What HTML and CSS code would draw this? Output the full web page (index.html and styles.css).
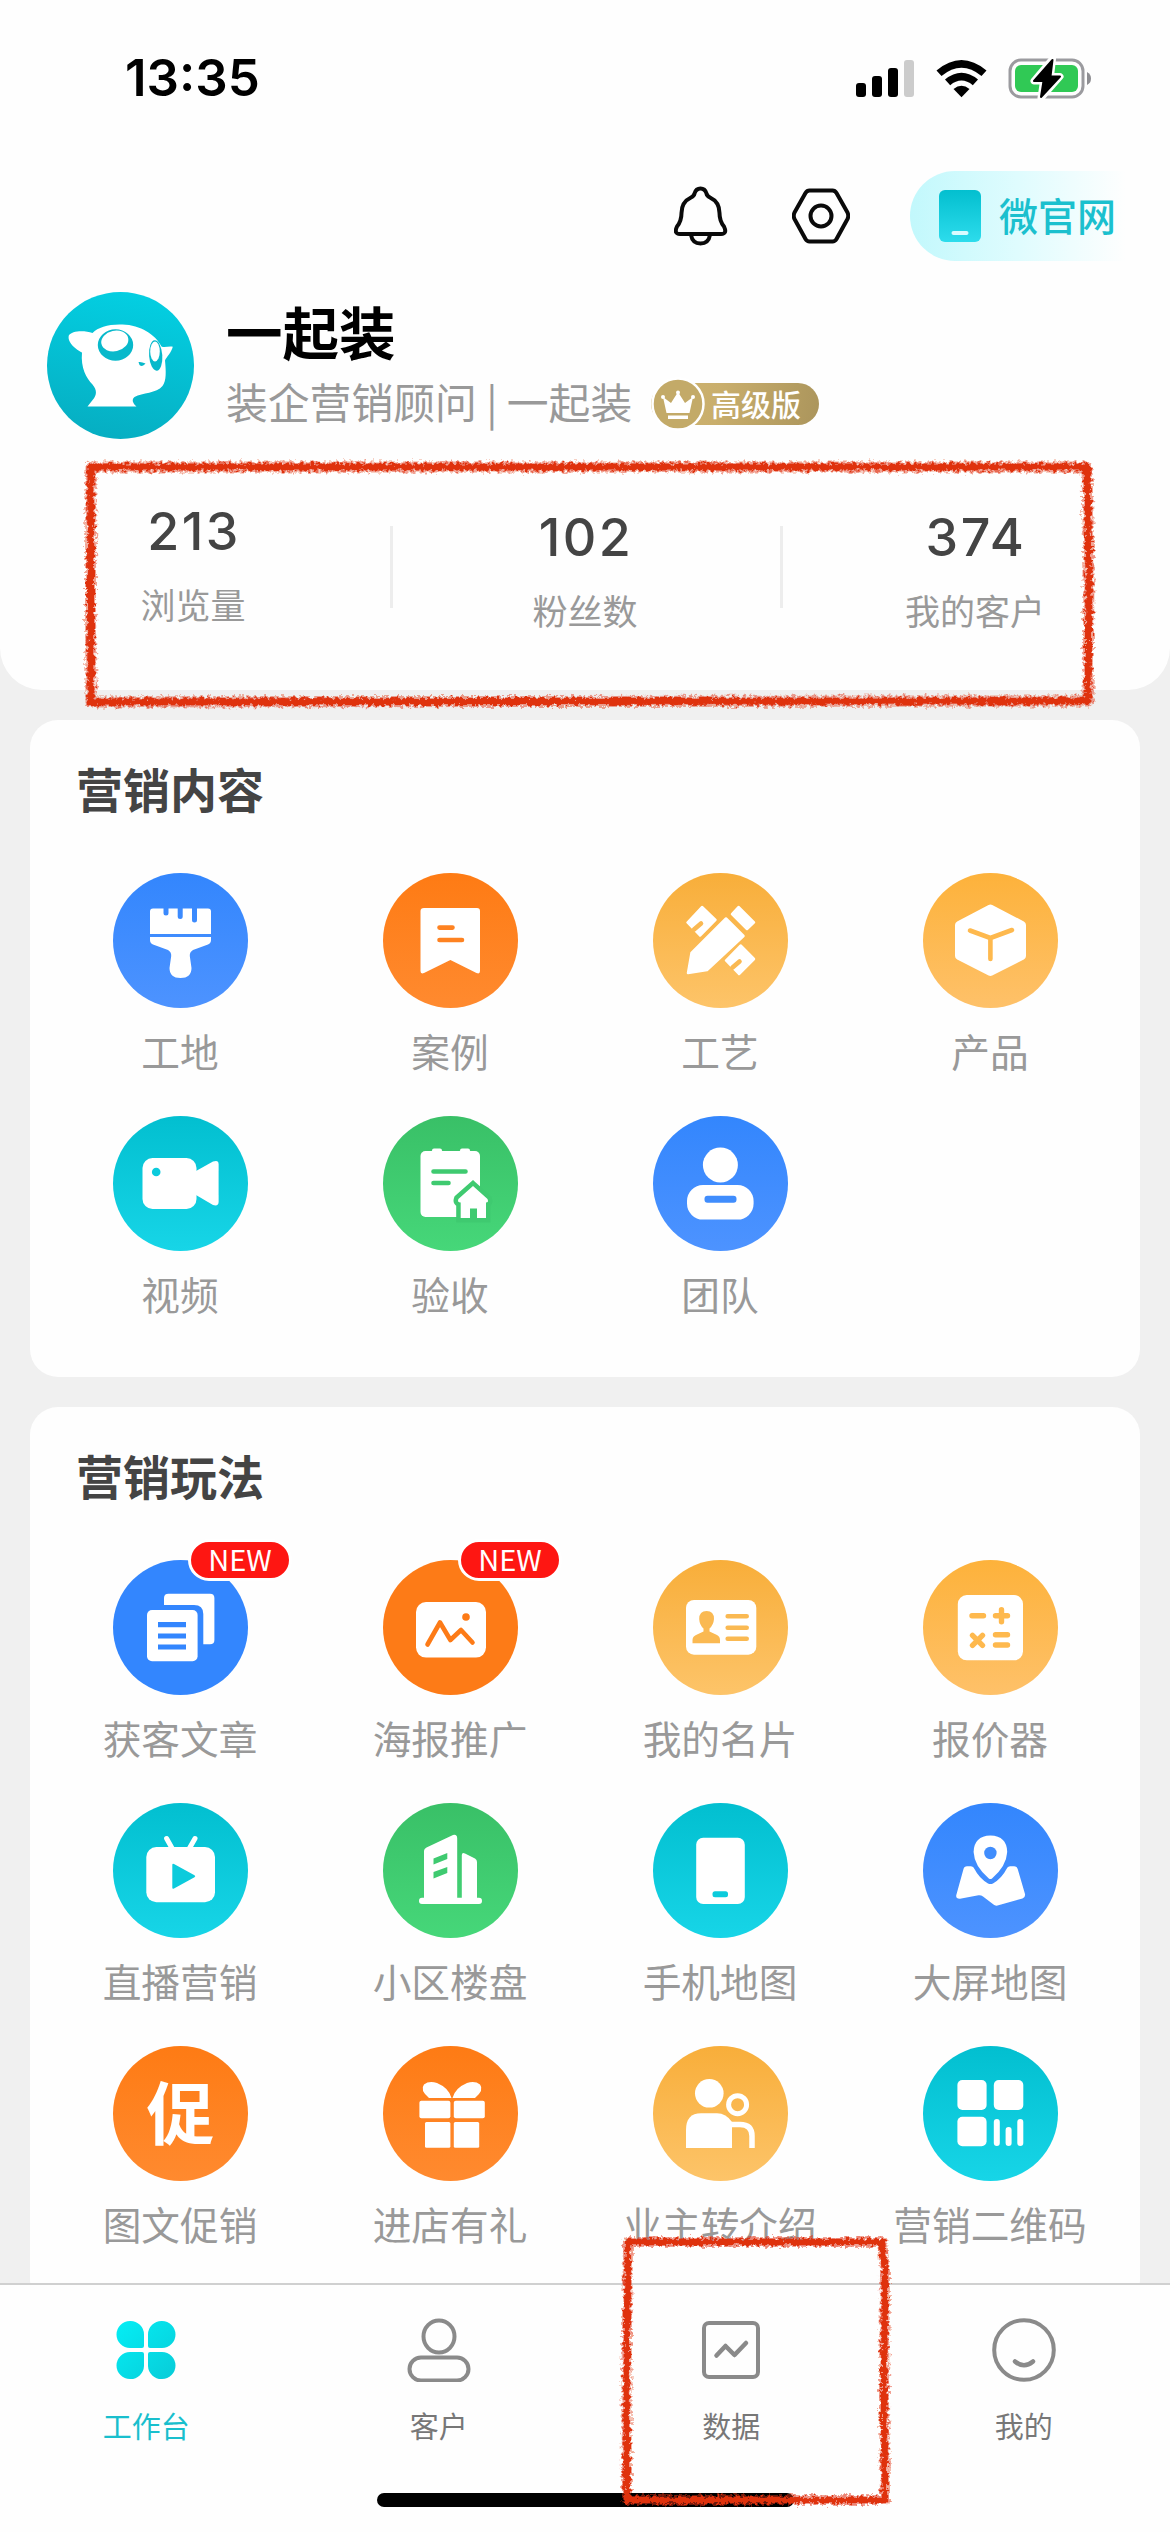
FILE: index.html
```html
<!DOCTYPE html>
<html lang="zh-CN">
<head>
<meta charset="utf-8">
<title>工作台</title>
<link rel="stylesheet" href="styles.css">
</head>
<body>
<div class="screen">
  <header class="header">
    <div class="status">
      <span class="time">13:35</span>
      <svg class="status-icons" width="240" height="44" viewBox="855 55 240 44">
        <rect x="856" y="82" width="10" height="14" rx="3"/>
        <rect x="872" y="75" width="10" height="21" rx="3"/>
        <rect x="888" y="67" width="10" height="29" rx="3"/>
        <rect x="904" y="59" width="10" height="37" rx="3" fill="#ccc"/>
        <path d="M936.500 69.500 Q961.500 48.500 986.500 69.500 L981.500 75 Q961.500 58.500 941.500 75Z"/>
        <path d="M945 78.500 Q961.500 65 978 78.500 L972.800 84.200 Q961.500 75 950.200 84.200Z"/>
        <path d="M953.500 88 Q961.500 81.500 969.500 88 L961.500 96.300Z"/>
        <rect x="1010" y="59" width="73" height="37" rx="11" fill="none" stroke="#9b9b9f" stroke-width="3"/>
        <path d="M1087 71 Q1091 73 1091 77.500 Q1091 82 1087 84Z" fill="#8e8e92"/>
        <rect x="1015" y="64" width="63" height="27" rx="6" fill="#30c955"/>
        <path d="M1052.500 58 L1034 80 H1043.500 L1041 97 L1060 75.500 H1050.500Z" stroke="#fff" stroke-width="7" stroke-linejoin="round"/>
        <path d="M1052.500 59 L1034 80 H1043.500 L1041 96 L1060 75.500 H1050.500Z" stroke="#000" stroke-width="2" stroke-linejoin="round"/>
      </svg>
    </div>

    <div class="actions">
      <svg class="bell" width="54" height="60" viewBox="0 0 54 60" fill="none" stroke="#0a0a0a" stroke-width="4" stroke-linejoin="round">
        <path d="M20.500 7.500 Q22 2.500 26.500 2.500 Q31 2.500 32.500 7.500 Q33 10 36 11.500 Q45.500 16 45.500 27 Q45.500 35 50 40.500 Q53.500 48 47 48 H6 Q-.5 48 3 40.500 Q7.500 35 7.500 27 Q7.500 16 17 11.500 Q20 10 20.500 7.500Z"/>
        <path d="M17 49 Q18.500 57.500 26.500 57.500 Q34.500 57.500 36 49"/>
      </svg>
      <svg class="hex" width="58" height="56" viewBox="0 0 58 56" fill="none" stroke="#0a0a0a" stroke-width="4" stroke-linejoin="round">
        <path d="M17.500 2.500 H40.500 Q43 2.500 44.500 5 L55.500 24.500 Q57 28 55.500 31 L44.500 51 Q43 53.500 40.500 53.500 H17.500 Q15 53.500 13.500 51 L2.500 31 Q1 28 2.500 24.500 L13.500 5 Q15 2.500 17.500 2.500Z"/>
        <circle cx="29" cy="28" r="10.500"/>
      </svg>
      <a class="site">
        <svg width="42" height="52" viewBox="0 0 42 52">
          <defs><linearGradient id="phone" x1="0" y1="0" x2="0" y2="1"><stop offset="0" stop-color="#03bfcf"/><stop offset="1" stop-color="#2ddcec"/></linearGradient></defs>
          <rect width="42" height="52" rx="6" fill="url(#phone)"/>
          <rect x="12.500" y="41" width="17" height="4" rx="2" fill="#d8fbff"/>
        </svg>
        <span>微官网</span>
      </a>
    </div>

    <div class="profile">
      <svg class="avatar" width="147" height="147" viewBox="16.500 12.500 147 147">
        <defs><linearGradient id="av" x1="0.600" y1="0" x2="0.400" y2="1"><stop offset="0" stop-color="#03cfe2"/><stop offset="1" stop-color="#06aec2"/></linearGradient></defs>
        <circle cx="90" cy="86" r="73.500" fill="url(#av)"/>
        <path fill="#fff" d="M62 53.500 C54 50.500 41 51 38.300 56 C36.500 63 46 70.500 51.500 73 C50 88 56 99 62 105 C67 111 66 116 62.500 120 L57 127 H106 C102 123.500 101 120 104 117.500 C112 113 126 114 132 106.500 C136 101 135.500 92 134.500 81 C136 77.500 141 73 142.300 67.300 C138 66.500 134 68.500 131 67 C125 55 110 45.500 92 45 C78 44.500 68 47.500 62 53.500Z"/>
        <ellipse cx="85" cy="65.500" rx="17.700" ry="15.700" fill="#08b9cb"/>
        <ellipse cx="84.300" cy="61.500" rx="13.700" ry="10.300" fill="#fff" transform="rotate(-12 84.300 61.500)"/>
        <ellipse cx="125.200" cy="76" rx="6.600" ry="15.200" fill="#08b9cb" transform="rotate(-4 125.200 76)"/>
        <ellipse cx="124.500" cy="72" rx="4.800" ry="10" fill="#fff"/>
        <path d="M108 82.500 Q111 82 115 84 Q112 88 109 85.500Z" fill="#08b9cb"/>
      </svg>
      <div class="who">
        <h1>一起装</h1>
        <div class="role">
          <span class="desc">装企营销顾问 | 一起装</span>
          <span class="vip">
            <svg width="54" height="54" viewBox="0 0 54 54">
              <circle cx="27" cy="27" r="25.500" fill="#c3aa68" stroke="#fff" stroke-width="2.500"/>
              <path fill="#fff" d="M12 20 L20 26 L27 15 L34 26 L42 20 L38.500 36 H15.500Z M17 38.500 H37 V42 H17Z"/>
              <circle cx="12" cy="20" r="2" fill="#fff"/><circle cx="27" cy="15.500" r="2" fill="#fff"/><circle cx="42" cy="20" r="2" fill="#fff"/>
            </svg>
            <em>高级版</em>
          </span>
        </div>
      </div>
    </div>

    <div class="stats">
      <div class="stat stat-first"><b>213</b><span>浏览量</span></div>
      <div class="stat"><b>102</b><span>粉丝数</span></div>
      <div class="stat"><b>374</b><span>我的客户</span></div>
    </div>
  </header>

  <main class="content">
    <section class="card">
      <h2>营销内容</h2>
      <div class="grid">
        <div class="tile"><svg class="ico blue" viewBox="0 0 135 135">
          <path d="M40 35.500 H50.500 V40 Q50.500 42.500 53 42.500 Q55.500 42.500 55.500 40 V35.500 H64.700 V43.500 Q64.700 46 67.200 46 Q69.700 46 69.700 43.500 V35.500 H79 V47 Q79 49.500 81.500 49.500 Q84 49.500 84 47 V35.500 H95 Q98 35.500 98 38.500 V61 H37 V38.500 Q37 35.500 40 35.500Z M37 64 H98 V67 Q98 70 95 71.500 L80 77 Q76.500 79 76.800 83 L78.500 95 Q78.500 105 67.500 105 Q56.500 105 56.500 95 L58.200 83 Q58.500 79 55 77 L40 71.500 Q37 70 37 67Z"/></svg><span>工地</span></div>
        <div class="tile"><svg class="ico orange" viewBox="0 0 135 135">
          <path d="M41 35 H94 Q97 35 97 38 V98 Q97 101.500 93.500 100 L67.400 87 L41 100 Q37.500 101.500 37.500 98 V38 Q37.500 35 41 35Z"/>
          <path class="cut" d="M56.500 54.600 H69.500 M56.500 67 H79"/></svg><span>案例</span></div>
        <div class="tile"><svg class="ico amber" viewBox="0 0 135 135">
          <path class="solid" d="M73 45.500 L90.500 63 L54 97 L35 100 L38.500 80Z M85.500 34 L101 49.300 L94 56 L79 41Z M49 34 L62.500 46.800 L47 62.500 L34.500 49.500Z M87.600 72.500 L101 86 L86 101 L73 87.500Z"/>
          <path class="cut" d="M41 56.500 L48 50.500 M79.500 94.500 L86.500 88.500"/></svg><span>工艺</span></div>
        <div class="tile"><svg class="ico gold" viewBox="0 0 135 135">
          <path stroke="#fff" stroke-width="8" stroke-linejoin="round" d="M67.400 35.500 L99 52 V83 L67.400 99 L36 83 V52Z"/>
          <path class="cut" d="M47 57.500 L67.400 65 L89 57 M67.400 65 V86"/></svg><span>产品</span></div>
        <div class="tile"><svg class="ico cyan" viewBox="0 0 135 135">
          <rect x="29.500" y="42" width="54" height="51" rx="10"/><path d="M83 55 L100 45.500 Q105.600 43.500 105.600 48 V86 Q105.600 90.500 100 89 L83 79Z"/>
          <circle class="hole" cx="43.200" cy="56" r="4.300"/></svg><span>视频</span></div>
        <div class="tile"><svg class="ico green" viewBox="0 0 135 135">
          <rect x="37.500" y="35" width="59.500" height="66" rx="5"/><rect x="49" y="32.500" width="10" height="6" rx="2"/><rect x="77" y="32.500" width="10" height="6" rx="2"/>
          <path class="cut" d="M50.500 55.500 H82.500 M50.500 67 H65.500"/>
          <path class="outlined" d="M90 70 L104.500 83 Q106 86.500 103 86.500 V102 H77.700 V86.500 Q74 86.500 75.400 83Z"/>
          <path d="M90 70 L104.500 83 Q106 86.500 103 86.500 V102 H94 V92.500 H87 V102 H77.700 V86.500 Q74 86.500 75.400 83Z"/><rect class="hole" x="87" y="92.500" width="7" height="10"/></svg><span>验收</span></div>
        <div class="tile"><svg class="ico blue" viewBox="0 0 135 135">
          <circle cx="67.400" cy="49" r="17.500"/><rect x="34" y="69" width="66.600" height="34.600" rx="16"/><rect class="hole" x="51.500" y="79.800" width="32" height="7" rx="3"/></svg><span>团队</span></div>
      </div>
    </section>

    <section class="card">
      <h2>营销玩法</h2>
      <div class="grid">
        <div class="tile"><i class="new">NEW</i><svg class="ico blue flat" viewBox="0 0 135 135">
          <path d="M51 45 V38 Q51 33.700 55.500 33.700 H97 Q101.400 33.700 101.400 38 V80 Q101.400 84.300 97 84.300 H90.300 V54 Q90.300 45 81 45Z"/>
          <rect x="34" y="50" width="50.600" height="51.300" rx="5"/><path class="cut square" d="M45 64.700 H73 M45 76 H73 M45 87 H73"/></svg><span>获客文章</span></div>
        <div class="tile"><i class="new">NEW</i><svg class="ico orange flat" viewBox="0 0 135 135">
          <rect x="33" y="42" width="70" height="55.600" rx="10"/><circle class="hole" cx="83" cy="57" r="3.800"/>
          <path class="cut" d="M44.500 84.500 L57 62.500 L67.400 80 L78 70 L89.500 82.500"/></svg><span>海报推广</span></div>
        <div class="tile"><svg class="ico amber" viewBox="0 0 135 135">
          <rect x="33" y="40" width="70.300" height="54.700" rx="8"/>
          <path class="hole" d="M53.600 51 Q61 51 61 59 Q60.500 65 56.500 68.500 V71.500 L64 75 Q67 76.500 67 80 V83.300 H39.500 V80 Q39.500 76.500 43 75 L50.500 71.500 V68.500 Q46.500 65 46.200 59 Q46.200 51 53.600 51Z"/>
          <path class="cut" d="M74.700 56.300 H93.700 M74.700 67.700 H93.700 M74.700 78.700 H93.700"/></svg><span>我的名片</span></div>
        <div class="tile"><svg class="ico gold" viewBox="0 0 135 135">
          <rect x="34.800" y="35" width="65.200" height="65.300" rx="9"/>
          <path class="cut thick" d="M49 55.700 H60.500 M72.500 55.700 H84.500 M78.500 49.700 V61.700 M49.500 75.300 L59.500 85.300 M59.500 75.300 L49.500 85.300 M72.500 74.700 H84.500 M72.500 85 H84.500"/></svg><span>报价器</span></div>
        <div class="tile"><svg class="ico cyan" viewBox="0 0 135 135">
          <rect x="33.300" y="44" width="68.700" height="55.300" rx="10"/><path d="M53.600 35.500 L59.500 46 M82 35.500 L76 46" stroke="#fff" stroke-width="5" stroke-linecap="round"/>
          <path class="hole" d="M59.300 62 Q59.300 60 61 61 L81.500 72.300 Q83 73.300 81.500 74.300 L61 85.500 Q59.300 86.500 59.300 84.500Z"/></svg><span>直播营销</span></div>
        <div class="tile"><svg class="ico green" viewBox="0 0 135 135">
          <path d="M41 48 Q41 45.500 43.500 44.500 L70 32 Q74.200 31 74.200 35.500 V94.700 H78.800 V52 Q79 49 82 50.500 L92 55.500 Q94 56.500 94 59 V94.700 H96 Q99 94.700 99 98 Q99 101 96 101 H39 Q36 101 36 98 Q36 94.700 39 94.700 H41Z"/>
          <path class="hole" d="M50.500 55.500 L64.300 50 V56 L50.500 61.500Z M50.500 69 L64.300 64 V70 L50.500 75.500Z"/></svg><span>小区楼盘</span></div>
        <div class="tile"><svg class="ico cyan" viewBox="0 0 135 135">
          <rect x="43.200" y="34.700" width="48.600" height="66.300" rx="7"/><rect class="hole" x="59.500" y="88.300" width="15.500" height="6" rx="2.500"/></svg><span>手机地图</span></div>
        <div class="tile"><svg class="ico blue" viewBox="0 0 135 135">
          <path d="M44 63.300 H48 Q50.500 63.300 51.500 66 Q56 75 65 80.500 Q67.400 81.500 70 80.500 Q79 75 83.500 66 Q84.500 63.300 87 63.300 H91 Q94 63.300 94.700 66 L102 91 Q102.500 94.500 99.500 95.500 L74.500 102.500 Q72 103 70.500 101.500 L60 93.500 Q58 92 55.500 92.300 L37 95.800 Q32.500 96 33.300 92 L40.500 66 Q41.200 63.300 44 63.300Z"/>
          <path d="M67.400 32.500 Q84 33 84.200 49 Q83.500 63 69 75.500 Q67.400 76.500 65.800 75.500 Q51.300 63 50.600 49 Q51 33 67.400 32.500Z"/><circle class="hole" cx="67.400" cy="50" r="6.200"/></svg><span>大屏地图</span></div>
        <div class="tile"><svg class="ico orange" viewBox="0 0 135 135">
          <text x="67.500" y="92.500" text-anchor="middle" class="glyph">促</text></svg><span>图文促销</span></div>
        <div class="tile"><svg class="ico orange" viewBox="0 0 135 135">
          <path d="M68.500 52 H46 Q36.500 44 41 38.500 Q46 34.500 54 37 Q66 42 68.500 52Z M69.500 52 H92 Q101.500 44 97 38.500 Q92 34.500 84 37 Q72 42 69.500 52Z"/>
          <rect x="36.400" y="54.700" width="31" height="17.600" rx="2"/><rect x="70.800" y="54.700" width="31" height="17.600" rx="2"/><rect x="42" y="76" width="25.400" height="25.700" rx="1.500"/><rect x="70.800" y="76" width="25.400" height="25.700" rx="1.500"/></svg><span>进店有礼</span></div>
        <div class="tile"><svg class="ico amber" viewBox="0 0 135 135">
          <circle cx="56.300" cy="47.300" r="14.300"/><path d="M33 102 V84 Q33 67.300 48 67.300 H64 Q73 67.300 79 76 V102Z"/>
          <circle cx="84.600" cy="58.700" r="9" fill="none" stroke="#fff" stroke-width="5"/><path d="M76 78.500 H87 Q99 78.500 99 90 V102" fill="none" stroke="#fff" stroke-width="5.500"/></svg><span>业主转介绍</span></div>
        <div class="tile"><svg class="ico cyan" viewBox="0 0 135 135">
          <rect x="34.400" y="34" width="29.200" height="30" rx="5"/><rect x="70.800" y="34" width="29.500" height="30" rx="5"/><rect x="34.400" y="70.700" width="29.200" height="29.500" rx="5"/>
          <rect x="70.800" y="73" width="6" height="27" rx="3"/><rect x="82.600" y="81" width="6" height="19" rx="3"/><rect x="94.300" y="73" width="6" height="27" rx="3"/></svg><span>营销二维码</span></div>
      </div>
    </section>
  </main>

  <nav class="tabbar">
    <div class="tabs">
      <div class="tab active">
        <svg width="64" height="64" viewBox="0 0 64 64">
          <defs><linearGradient id="clover" x1="0" y1="0" x2="1" y2="1"><stop offset="0" stop-color="#04eef5"/><stop offset="1" stop-color="#08ccd8"/></linearGradient></defs>
          <path fill="url(#clover)" d="M16 3 A13.500 13.500 0 0 1 30 16.500 V28 Q30 30 28 30 H16 A13.500 13.500 0 0 1 16 3Z M48 3 A13.500 13.500 0 0 1 48 30 H36 Q34 30 34 28 V16.500 A13.500 13.500 0 0 1 48 3Z M16 34 H28 Q30 34 30 36 V48 A13.500 13.500 0 0 1 16 61 A13.500 13.500 0 0 1 16 34Z M36 34 H48 A13.500 13.500 0 0 1 48 61 A13.500 13.500 0 0 1 34 48 V36 Q34 34 36 34Z"/>
        </svg><span>工作台</span></div>
      <div class="tab"><svg width="64" height="64" viewBox="0 0 64 64"><ellipse cx="32" cy="18.500" rx="15.500" ry="16"/><rect x="2.500" y="39.500" width="59" height="23" rx="11.500"/></svg><span>客户</span></div>
      <div class="tab"><svg width="64" height="64" viewBox="0 0 64 64"><rect x="5" y="5" width="54" height="54" rx="5"/><path d="M17.500 37.500 L26.500 28 L35.500 37 L47 25" stroke-width="4.500" stroke-linecap="round" stroke-linejoin="round"/></svg><span>数据</span></div>
      <div class="tab"><svg width="64" height="64" viewBox="0 0 64 64"><circle cx="32" cy="32" r="29.800"/><path d="M23 43.500 Q32 51 41 43.500" stroke-width="4.500" stroke-linecap="round"/></svg><span>我的</span></div>
    </div>
    <div class="home"></div>
  </nav>

  <!-- Crayon frames highlighting the statistics and the data tab -->
  <svg class="marks" width="1170" height="2532" viewBox="0 0 1170 2532">
    <defs>
      <filter id="crayon" filterUnits="userSpaceOnUse" x="0" y="400" width="1170" height="2132">
        <feTurbulence type="fractalNoise" baseFrequency="0.280" numOctaves="3" seed="4" result="n"/>
        <feDisplacementMap in="SourceGraphic" in2="n" scale="8" xChannelSelector="R" yChannelSelector="G"/>
      </filter>
    </defs>
    <g filter="url(#crayon)" fill="none" stroke="#df300f" stroke-linejoin="round">
      <path stroke-width="11" stroke-opacity="0.450" d="M91 467 H1087 L1089 575 L1088 701 L91 702 L90.500 590Z"/>
      <path stroke-width="7" d="M91 467 H1087 L1089 575 L1088 701 L91 702 L90.500 590Z"/>
      <path stroke-width="10" stroke-opacity="0.450" d="M628 2242 H882 L885 2270 L884 2400 L885 2500 H627 L626.500 2380Z"/>
      <path stroke-width="6.500" d="M628 2242 H882 L885 2270 L884 2400 L885 2500 H627 L626.500 2380Z"/>
    </g>
  </svg>
</div>
</body>
</html>
```
FILE: styles.css
```css
* { box-sizing: border-box; }

body {
  margin: 0;
  font-family: "Noto Sans CJK SC", "Noto Sans", sans-serif;
}

.screen {
  position: relative;
  display: flex;
  flex-direction: column;
  width: 1170px;
  height: 2532px;
  overflow: hidden;
  background: #f0f0f0;
}

/* Header */
.header {
  flex: none;
  height: 690px;
  background: #fefefe;
  border-radius: 0 0 42px 42px;
}

.status {
  display: flex;
  justify-content: space-between;
  align-items: center;
  height: 156px;
  padding: 0 75px 0 125px;
}

.time {
  font: 600 51px/60px Inter, sans-serif;
}

.actions {
  display: flex;
  justify-content: flex-end;
  align-items: center;
  height: 120px;
  padding-right: 44px;
}

.bell { margin-right: 64px; }
.hex { margin-right: 60px; }

.site {
  display: flex;
  align-items: center;
  gap: 18px;
  width: 216px;
  height: 90px;
  padding-left: 29px;
  border-radius: 45px 0 0 45px;
  background: linear-gradient(90deg, #c2f8fc, #dffcfe 50%, #fefefe);
}

.site span {
  margin-bottom: 5px;
  color: #1bc0ce;
  font-size: 39px;
  font-weight: 500;
  line-height: 56px;
  white-space: nowrap;
}

.profile {
  display: flex;
  height: 164px;
  padding: 16px 0 0 47px;
}

.who { padding-left: 32px; }

.who h1 {
  margin: 6px 0 0;
  color: #000;
  font-size: 56.500px;
  font-weight: 700;
  line-height: 64px;
}

.role {
  display: flex;
  align-items: center;
  height: 54px;
  margin-top: 15px;
  color: #999;
  font-size: 41.800px;
  white-space: pre;
}

.desc {
  width: 406px;
  margin-bottom: 6px;
  line-height: 54px;
}

.vip {
  display: flex;
  align-items: center;
  height: 42px;
  margin-left: 19px;
  padding-right: 18px;
  border-radius: 21px;
  background: linear-gradient(100deg, #cfb570, #c9ae6c 40%, #ab955c);
}

.vip svg { margin-right: 6px; }

.vip em {
  margin-bottom: 3px;
  color: #fff;
  font-size: 30px;
  font-style: normal;
  font-weight: 500;
  line-height: 40px;
}

.stats {
  display: grid;
  grid-template-columns: repeat(3, 1fr);
  padding-top: 66px;
}

.stat {
  display: flex;
  flex-direction: column;
  align-items: center;
  height: 130px;
  background: linear-gradient(#ededed, #ededed) no-repeat 0 20px / 3px 82px;
}

.stat-first {
  padding-right: 4px;
  margin-top: -6px;
  background: none;
}

.stat b {
  color: #444;
  font: 500 52px/60px Inter, sans-serif;
  margin-top: 2px;
  padding-left: 2px;
  letter-spacing: 2.500px;
}

.stat span {
  margin-top: 17px;
  color: #999;
  font-size: 35px;
  line-height: 50px;
}

/* Cards */
.content {
  flex: 1;
  min-height: 0;
  overflow: hidden;
  padding: 30px 30px 0;
}

.card {
  margin-bottom: 30px;
  padding: 38px 15px 57px;
  border-radius: 28px;
  background: #fefefe;
}

.card h2 {
  margin: 0 0 55px 31px;
  color: #444;
  font-size: 47px;
  font-weight: 700;
  line-height: 60px;
}

.grid {
  display: grid;
  grid-template-columns: repeat(4, 270px);
  row-gap: 39px;
}

.tile {
  position: relative;
  display: flex;
  flex-direction: column;
  align-items: center;
}

.tile span {
  margin-top: 15px;
  color: #999;
  font-size: 38.700px;
  line-height: 54px;
}

.ico {
  width: 135px;
  height: 135px;
  border-radius: 50%;
  fill: #fff;
  background: linear-gradient(var(--from), var(--to));
}

.blue { --from: #3386fd; --to: #4d93ff; --ink: #408dfd; }
.orange { --from: #fe7b14; --to: #ff8a2f; --ink: #fe8221; }
.amber { --from: #f8ae3a; --to: #fdc469; --ink: #fab952; }
.gold { --from: #fdb23b; --to: #fec169; --ink: #feb94e; }
.cyan { --from: #02bfd0; --to: #17d5e7; --ink: #0ccbdc; }
.green { --from: #39c067; --to: #46d779; --ink: #3fca70; }
.blue.flat { --from: #3386fe; --to: #3386fe; --ink: #3386fe; }
.orange.flat { --from: #fd7b17; --to: #fd7b17; --ink: #fd7b17; }

.hole { fill: var(--ink); }

.cut {
  fill: none;
  stroke: var(--ink);
  stroke-width: 4.600;
  stroke-linecap: round;
  stroke-linejoin: round;
}

.square { stroke-linecap: butt; stroke-width: 5.200; }
.thick { stroke-width: 5.400; }
.outlined { stroke: var(--ink); stroke-width: 9; }

.solid {
  stroke: #fff;
  stroke-width: 2.500;
  stroke-linejoin: round;
}

.glyph {
  font-size: 68px;
  font-weight: 700;
}

.new {
  position: absolute;
  top: -21px;
  left: 143px;
  width: 104px;
  height: 42px;
  border: 3px solid #fff;
  border-radius: 21px;
  background: #fe1612;
  color: #fff;
  font-size: 29px;
  font-style: normal;
  line-height: 32px;
  text-align: center;
}

/* Bottom navigation */
.tabbar {
  flex: none;
  height: 249px;
  border-top: 2px solid #d0d0d0;
  background: #fefefe;
}

.tabs {
  display: grid;
  grid-template-columns: repeat(4, 1fr);
  height: 208px;
  padding-top: 33px;
}

.tab {
  display: flex;
  flex-direction: column;
  align-items: center;
  color: #777;
}

.tab svg {
  fill: none;
  stroke: #8a8a8a;
  stroke-width: 4;
}

.tab span {
  margin-top: 23px;
  font-size: 29px;
  line-height: 40px;
}

.active { color: #19bfcd; }
.active svg { stroke: none; }

.home {
  width: 417px;
  height: 14px;
  margin: 0 auto;
  border-radius: 7px;
  background: #000;
}

.marks {
  position: absolute;
  top: 0;
  left: 0;
  pointer-events: none;
}
```
